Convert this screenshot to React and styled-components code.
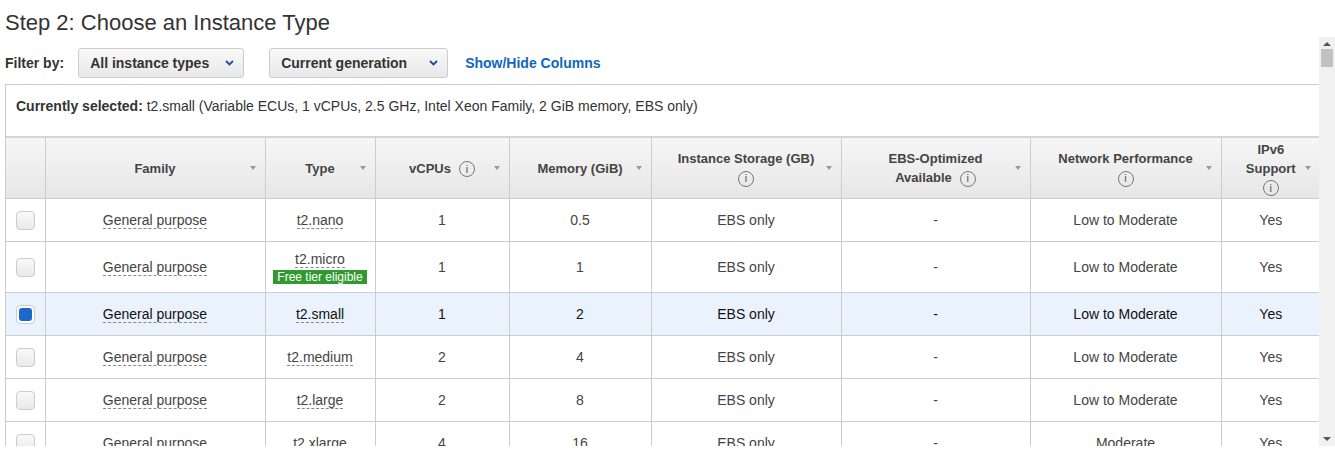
import React from 'react'
import styled, { createGlobalStyle } from 'styled-components'

const Global = createGlobalStyle`
  body { margin: 0; font-family: "Liberation Sans", Arial, sans-serif; color: #444; background: #fff; }
`

const Page = styled.div`
  width: 1335px;
  height: 446px;
  overflow: hidden;
  display: flex;
  flex-direction: column;
`

const Title = styled.h1`
  margin: 0;
  padding: 10px 0 0 5px;
  height: 27px;
  font-size: 22px;
  font-weight: normal;
  color: #333;
`

const Body = styled.div`
  flex: 1;
  display: flex;
  min-height: 0;
`

const Content = styled.div`
  flex: 1;
  overflow: hidden;
  padding-left: 5px;
`

const FilterRow = styled.div`
  display: flex;
  align-items: center;
  height: 47px;
  padding-top: 4px;
  box-sizing: border-box;
  font-size: 14px;
  font-weight: bold;
`

const FilterLabel = styled.span`
  color: #333;
  margin-right: 14px;
`

const Select = styled.div`
  display: flex;
  align-items: center;
  justify-content: space-between;
  box-sizing: border-box;
  width: ${(p) => p.w}px;
  height: 30px;
  padding: 0 9px 0 11px;
  margin-right: ${(p) => p.mr}px;
  border: 1px solid #ccc;
  border-radius: 3px;
  background: linear-gradient(#f9f9f9, #e8e8e8);
  color: #333;
  font-size: 14px;
`

const Link = styled.a`
  color: #1166bb;
  font-size: 14px;
`

const Panel = styled.div`
  width: 1314px;
  border: 1px solid #ccc;
  border-bottom: none;
`

const Selected = styled.div`
  height: 53px;
  padding: 13px 0 0 10px;
  box-sizing: border-box;
  font-size: 14px;
  color: #333;
  border-bottom: 2px solid #d5d5d5;
  b { font-weight: bold; }
`

const Table = styled.table`
  width: 100%;
  border-collapse: collapse;
  table-layout: fixed;
`

const Th = styled.th`
  height: 60px;
  padding: 0;
  position: relative;
  background: linear-gradient(#f6f6f6, #e6e6e6);
  border-left: 1px solid #ccc;
  font-size: 13px;
  font-weight: bold;
  color: #444;
  line-height: 19px;
  &:first-child { border-left: none; }
`

const Caret = styled.span`
  position: absolute;
  right: 9px;
  top: 28px;
  width: 0;
  height: 0;
  border-left: 3.5px solid transparent;
  border-right: 3.5px solid transparent;
  border-top: 4px solid #999;
`

const Info = styled.span`
  display: inline-flex;
  align-items: center;
  justify-content: center;
  width: 16px;
  height: 16px;
  margin-left: ${(p) => (p.inline ? '8px' : '0')};
  border: 1px solid #777;
  border-radius: 50%;
  font-size: 11px;
  font-weight: normal;
  color: #555;
  vertical-align: middle;
  box-sizing: border-box;
  line-height: 1;
`

const Tr = styled.tr`
  height: ${(p) => p.h}px;
  background: ${(p) => (p.sel ? '#eaf3fd' : '#fff')};
  color: ${(p) => (p.sel ? '#111' : '#444')};
`

const Td = styled.td`
  padding: 0;
  text-align: center;
  font-size: 14px;
  border-left: 1px solid #ccc;
  border-top: 1px solid #ccc;
  &:first-child { border-left: none; }
`

const Dotted = styled.span`
  border-bottom: 1px dashed #888;
`

const Check = styled.span`
  display: inline-block;
  width: 19px;
  height: 19px;
  box-sizing: border-box;
  border: 1px solid #ccc;
  border-radius: 4px;
  background: ${(p) => (p.on ? '#fff' : 'linear-gradient(#f9f9f9, #e9e9e9)')};
  position: relative;
  vertical-align: middle;
  &::after {
    content: '';
    display: ${(p) => (p.on ? 'block' : 'none')};
    position: absolute;
    inset: 2px;
    border-radius: 3px;
    background: #1b6ac9;
  }
`

const Badge = styled.div`
  display: inline-block;
  margin-top: 3px;
  padding: 0 4px;
  background: #2f9a2f;
  color: #fff;
  font-size: 12px;
  line-height: 14px;
`

const Scrollbar = styled.div`
  width: 16px;
  background: #f1f1f1;
  display: flex;
  flex-direction: column;
  align-items: center;
  justify-content: space-between;
`

const ScrollTop = styled.div`
  display: flex;
  flex-direction: column;
  align-items: center;
`

const Arrow = styled.span`
  width: 0;
  height: 0;
  margin: 5px 0;
  border-left: 4px solid transparent;
  border-right: 4px solid transparent;
  ${(p) => (p.up ? 'border-bottom: 4px solid #555;' : 'border-top: 4px solid #555;')}
`

const Thumb = styled.div`
  width: 12px;
  height: 18px;
  background: #c1c1c1;
  margin-top: -2px;
`

const cols = [
  { w: 39 },
  { w: 220, label: 'Family' },
  { w: 110, label: 'Type' },
  { w: 134, label: 'vCPUs', info: 'inline' },
  { w: 142, label: 'Memory (GiB)' },
  { w: 190, label: 'Instance Storage (GB)', info: 'below' },
  { w: 189, label: <>EBS-Optimized<br />Available</>, info: 'inline' },
  { w: 191, label: 'Network Performance', info: 'below' },
  { w: 99, label: <>IPv6<br />Support</>, info: 'below' },
]

const rows = [
  ['t2.nano', 1, '0.5', 'Low to Moderate'],
  ['t2.micro', 1, '1', 'Low to Moderate', true],
  ['t2.small', 1, '2', 'Low to Moderate'],
  ['t2.medium', 2, '4', 'Low to Moderate'],
  ['t2.large', 2, '8', 'Low to Moderate'],
  ['t2.xlarge', 4, '16', 'Moderate'],
]

const Chevron = () => (
  <svg width="9" height="6" viewBox="0 0 9 6">
    <path d="M1 1l3.5 3.5L8 1" stroke="#1f4e99" strokeWidth="1.8" fill="none" />
  </svg>
)

export default function App() {
  return (
    <Page>
      <Global />
      <Title>Step 2: Choose an Instance Type</Title>
      <Body>
        <Content>
          <FilterRow>
            <FilterLabel>Filter by:</FilterLabel>
            <Select w={166} mr={25}>All instance types <Chevron /></Select>
            <Select w={179} mr={17}>Current generation <Chevron /></Select>
            <Link>Show/Hide Columns</Link>
          </FilterRow>
          <Panel>
            <Selected>
              <b>Currently selected:</b> t2.small (Variable ECUs, 1 vCPUs, 2.5 GHz, Intel Xeon Family, 2 GiB memory, EBS only)
            </Selected>
            <Table>
              <colgroup>
                {cols.map((c, i) => <col key={i} style={{ width: c.w }} />)}
              </colgroup>
              <thead>
                <tr>
                  {cols.map((c, i) => (
                    <Th key={i}>
                      {c.label}
                      {c.info === 'inline' && <Info inline>i</Info>}
                      {c.info === 'below' && <><br /><Info>i</Info></>}
                      {c.label && <Caret />}
                    </Th>
                  ))}
                </tr>
              </thead>
              <tbody>
                {rows.map(([type, cpu, mem, net, free], i) => (
                  <Tr key={type} h={free ? 51 : 43} sel={i === 2}>
                    <Td><Check on={i === 2} /></Td>
                    <Td><Dotted>General purpose</Dotted></Td>
                    <Td>
                      <Dotted>{type}</Dotted>
                      {free && <><br /><Badge>Free tier eligible</Badge></>}
                    </Td>
                    <Td>{cpu}</Td>
                    <Td>{mem}</Td>
                    <Td>EBS only</Td>
                    <Td>-</Td>
                    <Td>{net}</Td>
                    <Td>Yes</Td>
                  </Tr>
                ))}
              </tbody>
            </Table>
          </Panel>
        </Content>
        <Scrollbar>
          <ScrollTop>
            <Arrow up />
            <Thumb />
          </ScrollTop>
          <Arrow />
        </Scrollbar>
      </Body>
    </Page>
  )
}
